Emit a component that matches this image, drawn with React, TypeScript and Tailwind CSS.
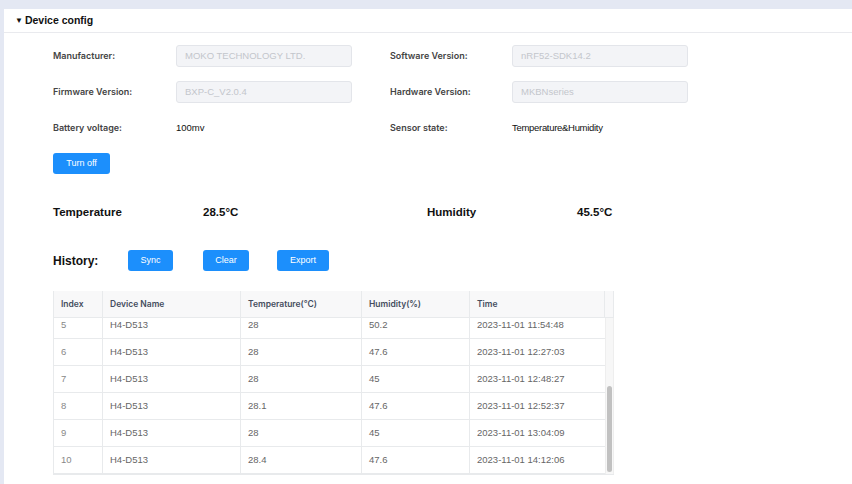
const FONT = "font-['Liberation_Sans',Arial,sans-serif]";
const INTER = "font-['Inter','Liberation_Sans',sans-serif]";

const history = [
  { index: 5, name: "H4-D513", temp: "28", hum: "50.2", time: "2023-11-01 11:54:48" },
  { index: 6, name: "H4-D513", temp: "28", hum: "47.6", time: "2023-11-01 12:27:03" },
  { index: 7, name: "H4-D513", temp: "28", hum: "45", time: "2023-11-01 12:48:27" },
  { index: 8, name: "H4-D513", temp: "28.1", hum: "47.6", time: "2023-11-01 12:52:37" },
  { index: 9, name: "H4-D513", temp: "28", hum: "45", time: "2023-11-01 13:04:09" },
  { index: 10, name: "H4-D513", temp: "28.4", hum: "47.6", time: "2023-11-01 14:12:06" },
];

// column widths shared by header and body rows
const COLS = "grid grid-cols-[49px_138px_121px_108px_135px]";

function Label({ children }: { children: React.ReactNode }) {
  return (
    <div className={`${INTER} flex items-center text-[9px] font-semibold text-[#444]`}>
      {children}
    </div>
  );
}

function ReadOnlyInput({ value }: { value: string }) {
  return (
    <div className="flex h-[22px] w-[176px] items-center rounded-[3px] border border-[#e3e5ea] bg-[#f3f4f7] px-[8px] text-[9.5px] text-[#c3c6cc]">
      {value}
    </div>
  );
}

function BlueButton({ label, w }: { label: string; w: string }) {
  return (
    <button
      type="button"
      className={`flex h-[21px] ${w} items-center justify-center rounded-[3px] bg-[#1c8ffc] text-[9px] text-white`}
    >
      {label}
    </button>
  );
}

export default function App() {
  return (
    <div className={`${FONT} h-[484px] w-[852px] overflow-hidden bg-[#e4e8f3] pt-[9px] pl-[4px]`}>
      <div className="h-full bg-white">
        {/* panel header */}
        <div className="flex h-[24px] items-center gap-[2px] border-b border-[#e9eaee] pl-[11px] text-[10.5px] font-bold text-[#111]">
          <span className="text-[8px]">▼</span>
          <span>Device config</span>
        </div>

        {/* device info form */}
        <div className="grid grid-cols-[123px_214px_122px_176px] grid-rows-[22px_22px_22px] gap-y-[14px] pt-[12px] pl-[49px]">
          <Label>Manufacturer:</Label>
          <ReadOnlyInput value="MOKO TECHNOLOGY LTD." />
          <Label>Software Version:</Label>
          <ReadOnlyInput value="nRF52-SDK14.2" />

          <Label>Firmware Version:</Label>
          <ReadOnlyInput value="BXP-C_V2.0.4" />
          <Label>Hardware Version:</Label>
          <ReadOnlyInput value="MKBNseries" />

          <Label>Battery voltage:</Label>
          <div className="flex items-center text-[9.5px] text-[#111]">100mv</div>
          <Label>Sensor state:</Label>
          <div className="flex items-center text-[9.5px] tracking-[-0.3px] text-[#111]">
            Temperature&amp;Humidity
          </div>
        </div>

        <div className="mt-[14px] pl-[49px]">
          <BlueButton label="Turn off" w="w-[57px]" />
        </div>

        {/* live readings */}
        <div className="mt-[29px] grid h-[20px] grid-cols-[150px_224px_150px_100px] items-center pl-[49px] text-[11.5px] font-bold text-[#111]">
          <span>Temperature</span>
          <span>28.5°C</span>
          <span>Humidity</span>
          <span>45.5°C</span>
        </div>

        {/* history toolbar */}
        <div className="mt-[27px] flex h-[21px] items-center pl-[49px]">
          <span className="w-[75px] text-[12px] font-bold text-[#111]">History:</span>
          <BlueButton label="Sync" w="w-[45px]" />
          <div className="w-[30px]" />
          <BlueButton label="Clear" w="w-[46px]" />
          <div className="w-[28px]" />
          <BlueButton label="Export" w="w-[52px]" />
        </div>

        {/* history table */}
        <div className="ml-[49px] mt-[20px] w-[561px] border-l border-b border-[#e8eaec] text-[9.5px]">
          <div className={`${INTER} flex h-[27px] border-b border-[#e8eaec] bg-[#f8f8f9] text-[8.5px] font-semibold text-[#454d5e]`}>
            <div className={COLS}>
              {["Index", "Device Name", "Temperature(°C)", "Humidity(%)", "Time"].map((h) => (
                <div key={h} className="flex items-center border-r border-[#e8eaec] pl-[7px]">
                  {h}
                </div>
              ))}
            </div>
            <div className="w-[9px] border-r border-[#e8eaec]" />
          </div>
          <div className="flex h-[156px]">
            <div className="h-full overflow-hidden">
              <div className="-mt-[6px]">
                {history.map((r) => (
                  <div key={r.index} className={`${COLS} h-[27px] border-b border-[#e8eaec] text-[#666]`}>
                    <div className="flex items-center border-r border-[#e8eaec] pl-[7px] text-[#888]">{r.index}</div>
                    <div className="flex items-center border-r border-[#e8eaec] pl-[7px]">{r.name}</div>
                    <div className="flex items-center border-r border-[#e8eaec] pl-[7px]">{r.temp}</div>
                    <div className="flex items-center border-r border-[#e8eaec] pl-[7px]">{r.hum}</div>
                    <div className="flex items-center pl-[7px]">{r.time}</div>
                  </div>
                ))}
              </div>
            </div>
            {/* scrollbar */}
            <div className="flex w-[9px] flex-col justify-end border-x border-[#eeeeee] bg-[#f7f7f7] px-[1px] pb-[2px]">
              <div className="h-[86px] rounded-full bg-[#c1c1c1]" />
            </div>
          </div>
        </div>
      </div>
    </div>
  );
}
